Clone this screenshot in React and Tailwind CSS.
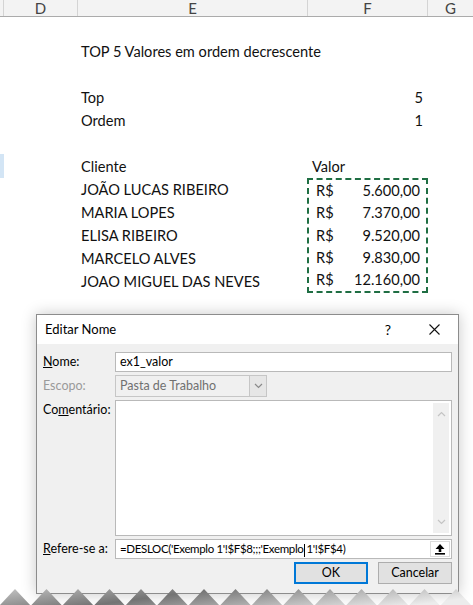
import React from 'react';

const sheetFont = { fontFamily: 'Lato, "Liberation Sans", sans-serif' };
const uiFont = { fontFamily: 'Lato, "Noto Sans", sans-serif' };

const clientes = [
  ['JOÃO LUCAS RIBEIRO', '5.600,00'],
  ['MARIA LOPES', '7.370,00'],
  ['ELISA RIBEIRO', '9.520,00'],
  ['MARCELO ALVES', '9.830,00'],
  ['JOAO MIGUEL DAS NEVES', '12.160,00'],
];

const Row = ({ left, right, rightClass = '' }) => (
  <div className="flex h-[23px] items-center">
    <div className="w-[307px] pl-[81px] whitespace-nowrap">{left}</div>
    <div className={`w-[120px] pl-[5px] pr-[4px] ${rightClass}`}>{right}</div>
  </div>
);

const UpArrowIcon = () => (
  <svg width="12" height="12" viewBox="0 0 12 12">
    <path d="M6 1 L10.5 6 L7.3 6 L7.3 9 L4.7 9 L4.7 6 L1.5 6 Z" fill="#000" />
    <rect x="1" y="10" width="10" height="1.6" fill="#000" />
  </svg>
);

const Chevron = ({ up, color = '#7a7a7a' }) => (
  <svg width="9" height="6" viewBox="0 0 9 6">
    <path d={up ? 'M1 5 L4.5 1.5 L8 5' : 'M1 1 L4.5 4.5 L8 1'} fill="none" stroke={color} strokeWidth="1.2" />
  </svg>
);

const TornEdge = () => {
  const peaks = [];
  for (let i = 0; i < 16; i++) {
    const cx = 15 + i * 31.5;
    peaks.push(`M${cx - 16} 17 L${cx} 0 L${cx + 16} 17 Z`);
  }
  return (
    <svg width="473" height="17" viewBox="0 0 473 17" className="block">
      <defs>
        <linearGradient id="tear" x1="0" y1="0" x2="1" y2="0.25">
          <stop offset="0" stopColor="#c4c4c4" />
          <stop offset="0.4" stopColor="#747474" />
          <stop offset="0.75" stopColor="#bdbdbd" />
          <stop offset="1" stopColor="#ececec" />
        </linearGradient>
      </defs>
      <path d={peaks.join(' ')} fill="url(#tear)" />
    </svg>
  );
};

export default function App() {
  return (
    <div className="w-[473px] h-[605px] bg-white overflow-hidden flex flex-col text-[#111]">
      {/* column headers */}
      <div className="h-[17px] shrink-0 flex bg-[#f3f3f3] border-b border-[#ababab] text-[15px] text-[#444] overflow-hidden" style={sheetFont}>
        <div className="w-[3px]" />
        <div className="w-[74px] border-l border-[#d4d4d4] flex justify-center -mt-[3px]">D</div>
        <div className="w-[230px] border-l border-[#d4d4d4] flex justify-center -mt-[3px]">E</div>
        <div className="w-[120px] border-l border-[#d4d4d4] flex justify-center -mt-[3px]">F</div>
        <div className="flex-1 border-l border-[#d4d4d4] flex justify-center -mt-[3px]">G</div>
      </div>

      {/* sheet */}
      <div className="relative shrink-0 text-[14.6px]" style={sheetFont}>
        <div className="absolute left-0 top-[137px] w-[4px] h-[24px] bg-[#d3e5f5]" />
        <div className="h-[23px]" />
        <Row left="TOP 5 Valores em ordem decrescente" />
        <div className="h-[23px]" />
        <Row left="Top" right="5" rightClass="text-right" />
        <Row left="Ordem" right="1" rightClass="text-right" />
        <div className="h-[23px]" />
        <Row left="Cliente" right="Valor" />
        <div className="flex">
          <div className="w-[307px]">
            {clientes.map(([nome]) => (
              <div key={nome} className="h-[23px] flex items-center pl-[81px]">{nome}</div>
            ))}
          </div>
          <div className="w-[121px] h-[115px] border-2 border-dashed border-[#1f6e43] flex flex-col">
            {clientes.map(([nome, valor]) => (
              <div key={nome} className="flex-1 flex items-center justify-between pl-[7px] pr-[6px]">
                <span>R$</span>
                <span>{valor}</span>
              </div>
            ))}
          </div>
        </div>
      </div>

      {/* dialog */}
      <div
        className="mt-[21px] ml-[36px] w-[423px] h-[280px] shrink-0 border border-[#8c8c8c] bg-[#f0f0f0] flex flex-col shadow-[0_0_14px_rgba(0,0,0,0.22)] text-[12.5px] text-[#000]"
        style={uiFont}
      >
        <div className="h-[29px] bg-white flex items-center pl-[8px] pr-[18px] text-[13px]">
          <span className="flex-1">Editar Nome</span>
          <span className="mr-[38px] text-[14px]">?</span>
          <svg width="11" height="11" viewBox="0 0 11 11">
            <path d="M0.5 0.5 L10.5 10.5 M10.5 0.5 L0.5 10.5" stroke="#111" strokeWidth="1.1" />
          </svg>
        </div>

        <div className="flex-1 flex flex-col pl-[6px] pr-[6px] pt-[8px]">
          <div className="flex items-center h-[20px]">
            <div className="w-[72px]"><span className="underline">N</span>ome:</div>
            <div className="flex-1 h-[20px] bg-white border border-[#b9b9b9] flex items-center pl-[4px]">ex1_valor</div>
          </div>

          <div className="flex items-center h-[22px] mt-[3px]">
            <div className="w-[72px] text-[#9a9a9a]">Escopo:</div>
            <div className="w-[152px] h-[22px] bg-[#f0f0f0] border border-[#c6c6c6] flex items-center">
              <span className="flex-1 pl-[4px] text-[#707070]">Pasta de Trabalho</span>
              <div className="w-[17px] h-full bg-[#e6e6e6] border-l border-[#c6c6c6] flex items-center justify-center">
                <Chevron color="#8a8a8a" />
              </div>
            </div>
          </div>

          <div className="flex mt-[3px]">
            <div className="w-[72px] pt-[1px]">Co<span className="underline">m</span>entário:</div>
            <div className="flex-1 h-[136px] bg-white border border-[#b9b9b9] flex justify-end p-[2px]">
              <div className="w-[16px] h-full bg-[#f0f0f0] flex flex-col items-center justify-between py-[8px]">
                <Chevron up color="#c4c4c4" />
                <Chevron color="#c4c4c4" />
              </div>
            </div>
          </div>

          <div className="flex items-center mt-[3px]">
            <div className="w-[72px]"><span className="underline">R</span>efere-se a:</div>
            <div className="flex-1 h-[20px] bg-white border border-[#b9b9b9] flex items-center pl-[4px] pr-[1px]">
              <span className="flex-1 whitespace-nowrap text-[11.5px] tracking-[-0.35px]">
                =DESLOC('Exemplo 1'!$F$8;;;'Exemplo<span className="inline-block w-px h-[13px] bg-black align-middle mx-[1px]" />1'!$F$4)
              </span>
              <div className="w-[20px] h-[16px] bg-white border border-[#dcdcdc] flex items-center justify-center">
                <UpArrowIcon />
              </div>
            </div>
          </div>

          <div className="flex justify-end gap-[10px] mt-[3px]">
            <button className="w-[74px] h-[22px] bg-[#e1e1e1] border-2 border-[#0078d7] flex items-center justify-center">OK</button>
            <button className="w-[74px] h-[22px] bg-[#e1e1e1] border border-[#adadad] flex items-center justify-center">Cancelar</button>
          </div>
        </div>
      </div>

      <div className="-mt-[5px] shrink-0">
        <TornEdge />
      </div>
    </div>
  );
}
